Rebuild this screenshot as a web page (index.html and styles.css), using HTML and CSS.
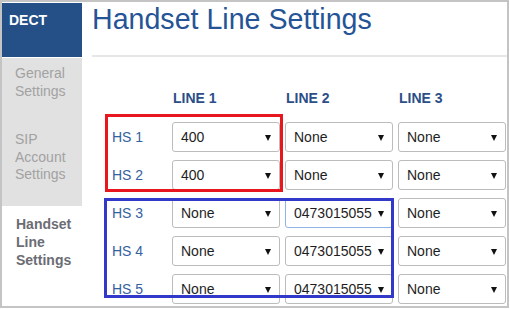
FILE: index.html
```html
<!DOCTYPE html>
<html lang="en">
<head>
    <meta charset="UTF-8">
    <title>Handset Line Settings</title>
    <link rel="stylesheet" href="styles.css">
</head>
<body>
    <div class="frame">
        <div class="sidebar">
            <div class="nav-head">DECT</div>
            <div class="nav-group">
                <div class="nav-item general">General Settings</div>
                <div class="nav-item sip">SIP Account Settings</div>
            </div>
            <div class="nav-item active">Handset Line Settings</div>
        </div>
        <div class="main">
            <h1 class="title">Handset Line Settings</h1>
            <div class="line-grid">
                <div></div>
                <div class="col-head">LINE 1</div>
                <div class="col-head">LINE 2</div>
                <div class="col-head">LINE 3</div>

                <div class="hs">HS 1</div>
                <div class="select">400</div>
                <div class="select">None</div>
                <div class="select">None</div>

                <div class="hs">HS 2</div>
                <div class="select">400</div>
                <div class="select">None</div>
                <div class="select">None</div>

                <div class="hs">HS 3</div>
                <div class="select">None</div>
                <div class="select focused">0473015055</div>
                <div class="select">None</div>

                <div class="hs">HS 4</div>
                <div class="select">None</div>
                <div class="select">0473015055</div>
                <div class="select">None</div>

                <div class="hs">HS 5</div>
                <div class="select">None</div>
                <div class="select">0473015055</div>
                <div class="select">None</div>
            </div>
        </div>
        <div class="mark mark-red"></div>
        <div class="mark mark-blue"></div>
    </div>
</body>
</html>
```

FILE: styles.css
```css
body {
    margin: 0;
    padding: 0;
    font-family: "Liberation Sans", Arial, Helvetica, sans-serif;
    background: #ffffff;
}
.frame {
    position: relative;
    display: flex;
    width: 509px;
    height: 308px;
    box-sizing: border-box;
    border: 2px solid #c4c4c4;
    overflow: hidden;
}
.sidebar {
    width: 80px;
    flex-shrink: 0;
    padding-top: 1px;
    font-size: 14px;
}
.nav-head {
    height: 54px;
    box-sizing: border-box;
    padding: 8px 7px;
    margin-bottom: 1px;
    background: #254f87;
    color: #ffffff;
    font-weight: bold;
    line-height: 18px;
}
.nav-group {
    height: 148px;
    background: #e1e1e1;
}
.nav-item {
    color: #a2a2a2;
    line-height: 18px;
    padding-left: 13px;
}
.nav-item.general {
    padding-top: 6px;
    width: 55px;
}
.nav-item.sip {
    padding-top: 31px;
    line-height: 17.5px;
    width: 58px;
}
.nav-item.active {
    padding-top: 9px;
    padding-left: 14px;
    width: 58px;
    color: #6b6c74;
    font-weight: bold;
}
.main {
    flex: 1;
    padding-left: 10px;
}
.title {
    margin: 0;
    padding-bottom: 19px;
    border-bottom: 2px solid #e6e6e6;
    font-size: 28.6px;
    font-weight: normal;
    line-height: 34px;
    color: #255496;
}
.line-grid {
    display: grid;
    grid-template-columns: 75px 108px 108px 108px;
    grid-template-rows: 25px;
    grid-auto-rows: 30px;
    column-gap: 5px;
    row-gap: 8px;
    margin-top: 32px;
}
.col-head {
    padding-left: 1px;
    font-size: 14px;
    font-weight: bold;
    line-height: 18px;
    color: #2c4e88;
}
.hs {
    display: flex;
    align-items: center;
    padding-left: 20px;
    font-size: 14px;
    color: #3561a0;
}
.select {
    position: relative;
    display: flex;
    align-items: center;
    box-sizing: border-box;
    padding-left: 8px;
    border: 1px solid #bcbcbc;
    border-radius: 3px;
    background: #ffffff;
    font-size: 14px;
    color: #1e1e1e;
}
.select::after {
    content: "";
    position: absolute;
    right: 8px;
    top: 12px;
    border-left: 3.5px solid transparent;
    border-right: 3.5px solid transparent;
    border-top: 6px solid #111111;
}
.select.focused {
    border-color: #8fb3e3;
}
.mark {
    position: absolute;
    box-sizing: border-box;
    border: 3px solid;
}
.mark-red {
    left: 103px;
    top: 112px;
    width: 178px;
    height: 78px;
    border-color: #e8161e;
}
.mark-blue {
    left: 102px;
    top: 196px;
    width: 290px;
    height: 100px;
    border-color: #3238c8;
}
```
